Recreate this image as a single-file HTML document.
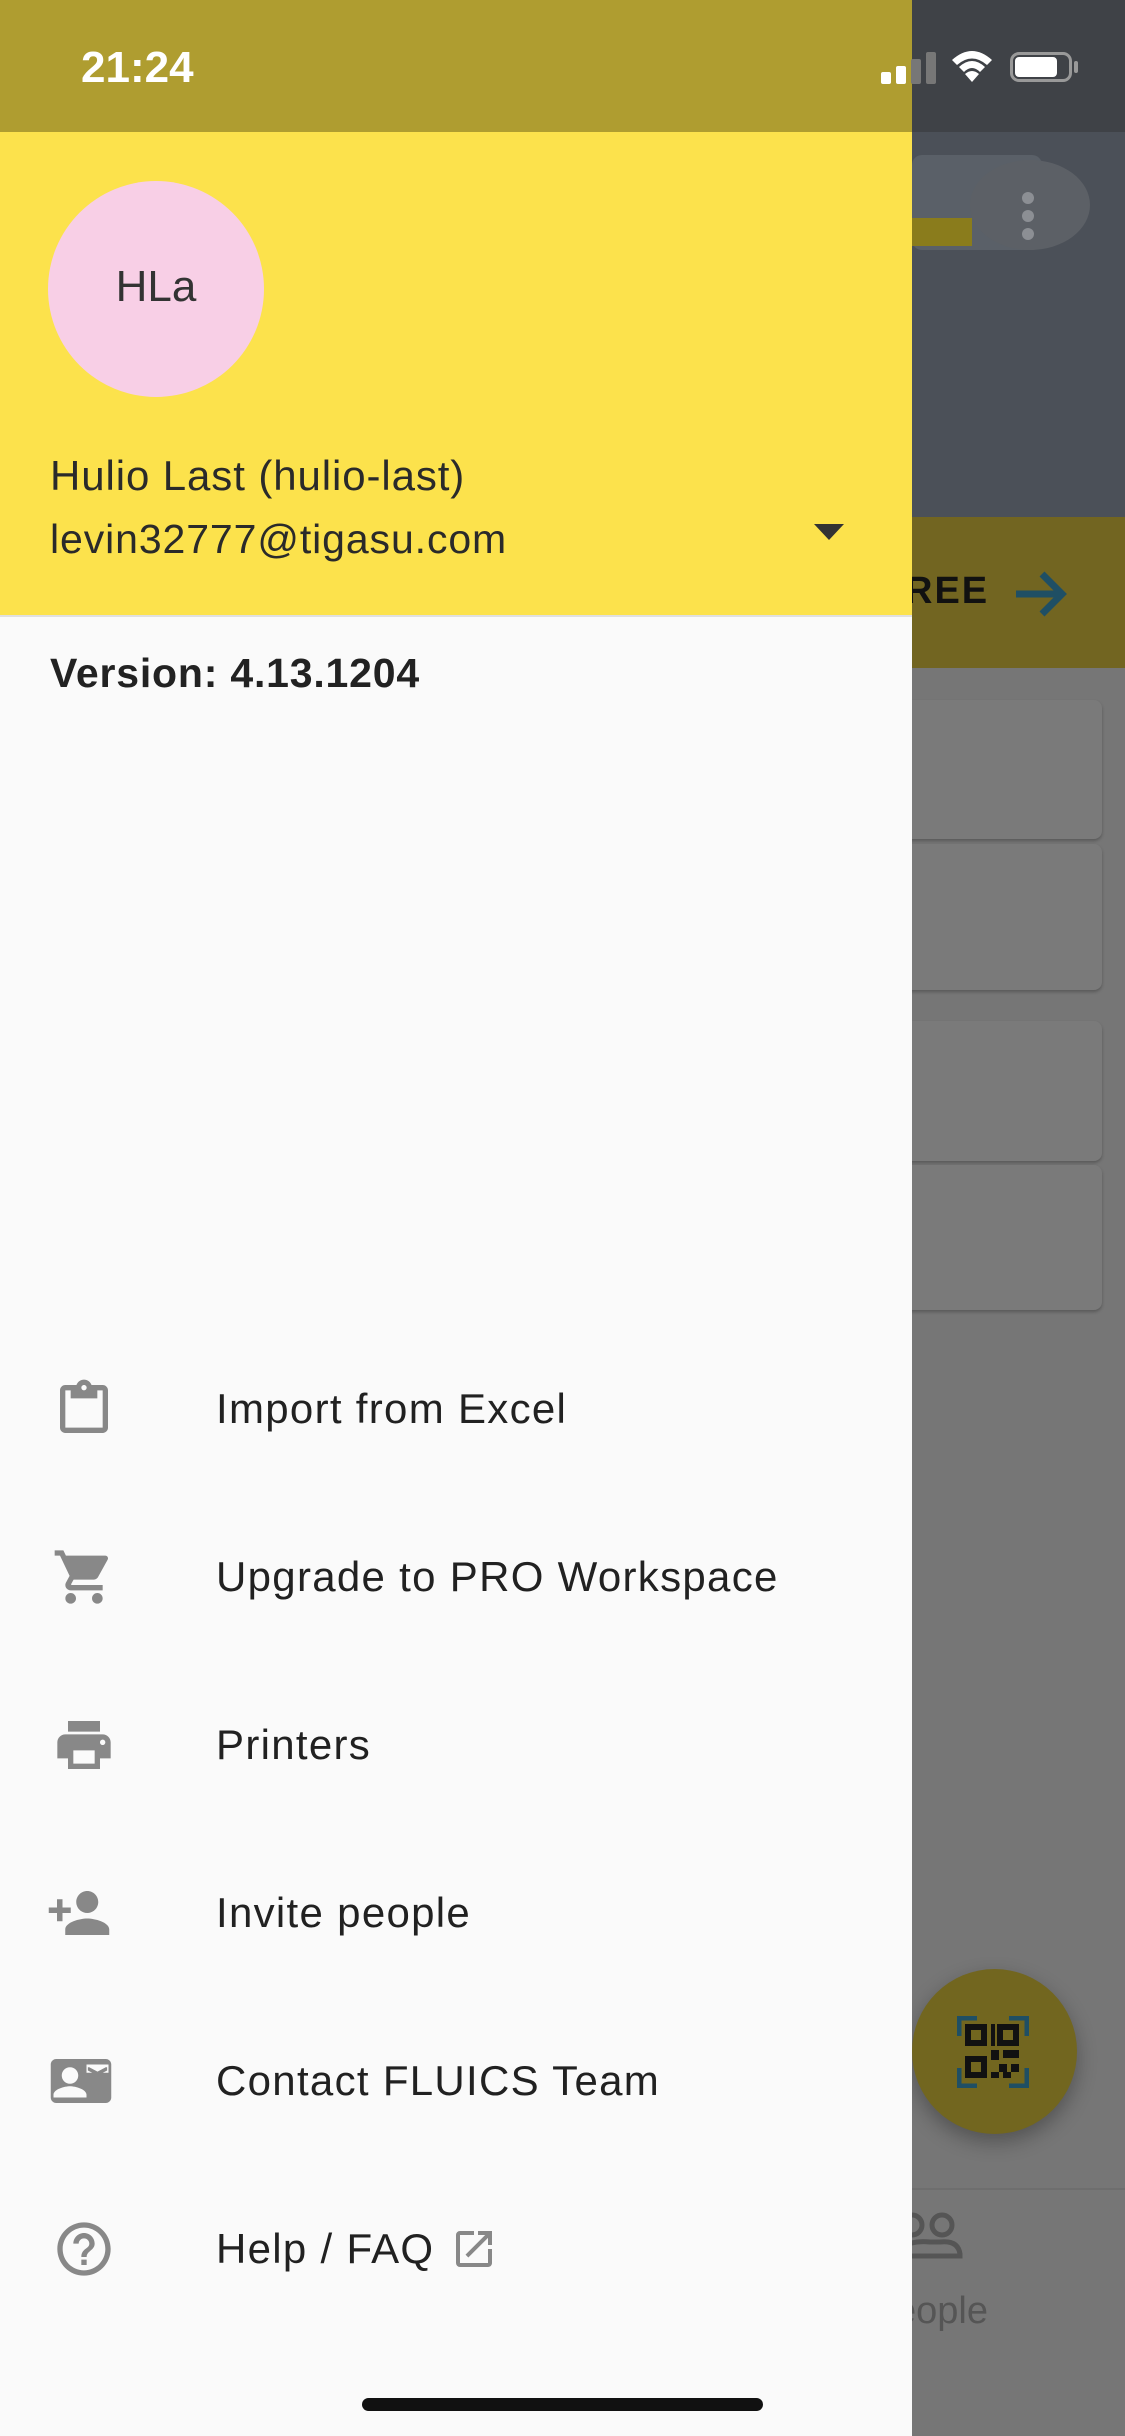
<!DOCTYPE html>
<html><head><meta charset="utf-8"><style>
*{margin:0;padding:0;box-sizing:border-box}
body{width:1125px;height:2436px;position:relative;overflow:hidden;font-family:"Liberation Sans",sans-serif;background:#767676}
.abs{position:absolute}
.drawer{left:0;top:0;width:912px;height:2436px;background:#fafafa}
.item{position:absolute;left:0;width:912px;height:168px}
.item .t{position:absolute;left:216px;top:50%;transform:translateY(-50%);font-size:42px;color:#212121;letter-spacing:1.3px}
.item svg{position:absolute;left:52px;top:50%;transform:translateY(-50%)}
</style></head><body>
<!-- background app (dimmed) -->
<div class="abs" style="left:880px;top:0;width:245px;height:132px;background:#3f4247"></div>
<div class="abs" style="left:880px;top:132px;width:245px;height:385px;background:#4b5058"></div>
<div class="abs" style="left:912px;top:155px;width:130px;height:95px;background:#5a6068;border-radius:10px"></div>
<div class="abs" style="left:970px;top:160px;width:120px;height:90px;border-radius:50%;background:#5c6066"></div>
<div class="abs" style="left:1022px;top:192px;width:12px;height:12px;border-radius:50%;background:#8c8f94"></div>
<div class="abs" style="left:1022px;top:210px;width:12px;height:12px;border-radius:50%;background:#8c8f94"></div>
<div class="abs" style="left:1022px;top:228px;width:12px;height:12px;border-radius:50%;background:#8c8f94"></div>
<div class="abs" style="left:912px;top:218px;width:60px;height:28px;background:#8a7c1c"></div>
<div class="abs" style="left:880px;top:517px;width:245px;height:151px;background:#726521"></div>
<div class="abs" style="left:905px;top:570px;font-size:38px;font-weight:bold;color:#111;letter-spacing:2px">REE</div>
<svg class="abs" style="left:1012px;top:570px" width="56" height="48" viewBox="0 0 56 48"><path d="M4 24H50M30 4L50 24L30 44" stroke="#1f4f64" stroke-width="7" fill="none"/></svg>
<div class="abs" style="left:880px;top:700px;width:222px;height:139px;background:#7a7a7a;border-radius:8px;box-shadow:0 2px 3px rgba(0,0,0,.25)"></div>
<div class="abs" style="left:880px;top:844px;width:222px;height:146px;background:#7a7a7a;border-radius:8px;box-shadow:0 2px 3px rgba(0,0,0,.25)"></div>
<div class="abs" style="left:880px;top:1021px;width:222px;height:140px;background:#7a7a7a;border-radius:8px;box-shadow:0 2px 3px rgba(0,0,0,.25)"></div>
<div class="abs" style="left:880px;top:1165px;width:222px;height:145px;background:#7a7a7a;border-radius:8px;box-shadow:0 2px 3px rgba(0,0,0,.25)"></div>
<div class="abs" style="left:880px;top:2188px;width:245px;height:2px;background:#6e6e6e"></div>
<div class="abs" style="left:912px;top:1969px;width:165px;height:165px;border-radius:50%;background:#72661f;box-shadow:0 8px 20px rgba(0,0,0,.3)"></div>
<svg class="abs" style="left:957px;top:2016px" width="72" height="72" viewBox="0 0 72 72"><g fill="none" stroke="#1f4f64" stroke-width="5"><path d="M2 20V2H20M52 2H70V20M70 52V70H52M20 70H2V52"/></g><g fill="#111"><rect x="8" y="8" width="22" height="22"/><rect x="40" y="8" width="22" height="22"/><rect x="8" y="40" width="22" height="22"/><rect x="34" y="8" width="4" height="22"/><rect x="34" y="34" width="8" height="10"/><rect x="46" y="34" width="16" height="8"/><rect x="42" y="48" width="8" height="8"/><rect x="54" y="48" width="8" height="8"/><rect x="34" y="56" width="8" height="6"/><rect x="46" y="56" width="8" height="6"/></g><g fill="#72661f"><rect x="14" y="14" width="10" height="10"/><rect x="46" y="14" width="10" height="10"/><rect x="14" y="46" width="10" height="10"/></g></svg>
<svg class="abs" style="left:900px;top:2210px" width="80" height="50" viewBox="0 0 80 50"><g fill="none" stroke="#555" stroke-width="5"><circle cx="12" cy="15" r="10"/><circle cx="42" cy="15" r="10"/><path d="M0 46V38Q12 30 30 32H40Q58 30 60 44V46H0"/></g></svg>
<div class="abs" style="left:895px;top:2290px;font-size:38px;color:#555">eople</div>
<!-- drawer -->
<div class="abs drawer"></div>
<div class="abs" style="left:0;top:0;width:912px;height:132px;background:#af9d30"></div>
<div class="abs" style="left:81px;top:43px;font-size:44px;font-weight:bold;color:#fff">21:24</div>
<!-- status icons -->
<div class="abs" style="left:881px;top:72px;width:10px;height:12px;background:#fff;border-radius:2px"></div>
<div class="abs" style="left:896px;top:66px;width:10px;height:18px;background:#fff;border-radius:2px"></div>
<div class="abs" style="left:911px;top:59px;width:10px;height:25px;background:#777;border-radius:2px"></div>
<div class="abs" style="left:926px;top:52px;width:10px;height:32px;background:#777;border-radius:2px"></div>
<svg class="abs" style="left:948px;top:44px" width="48" height="40" viewBox="0 0 48 36"><path d="M24 36L17 28Q24 22 31 28Z M4 14Q24 -4 44 14L39 19Q24 6 9 19Z M11 21Q24 9 37 21L32 26Q24 18 16 26Z" fill="#fff"/></svg>
<div class="abs" style="left:1010px;top:52px;width:62px;height:30px;border:3px solid #999;border-radius:9px"></div>
<div class="abs" style="left:1015px;top:57px;width:42px;height:20px;background:#fff;border-radius:4px"></div>
<div class="abs" style="left:1074px;top:61px;width:4px;height:12px;background:#999;border-radius:2px"></div>
<div class="abs" style="left:0;top:132px;width:912px;height:483px;background:#fce24c"></div>
<div class="abs" style="left:48px;top:181px;width:216px;height:216px;border-radius:50%;background:#f8cfe6"></div>
<div class="abs" style="left:48px;top:262px;width:216px;text-align:center;font-size:44px;color:#333">HLa</div>
<div class="abs" style="left:50px;top:452px;font-size:42px;color:#2a2a2a;letter-spacing:.9px">Hulio Last (hulio-last)</div>
<div class="abs" style="left:50px;top:516px;font-size:41px;color:#2a2a2a;letter-spacing:.9px">levin32777@tigasu.com</div>
<svg class="abs" style="left:814px;top:524px" width="30" height="16"><path d="M0 0H30L15 16Z" fill="#333"/></svg>
<div class="abs" style="left:0;top:615px;width:912px;height:2px;background:#e0e0e0"></div>
<div class="abs" style="left:50px;top:650px;font-size:41px;font-weight:bold;color:#222;letter-spacing:.8px">Version: 4.13.1204</div>

<div class="item" style="top:1325px"><svg width="64" height="64" viewBox="0 0 24 24"><path d="M19 3h-4.18C14.4 1.84 13.3 1 12 1s-2.4.84-2.82 2H5c-1.1 0-2 .9-2 2v14c0 1.1.9 2 2 2h14c1.1 0 2-.9 2-2V5c0-1.1-.9-2-2-2zm-7 0c.55 0 1 .45 1 1s-.45 1-1 1-1-.45-1-1 .45-1 1-1zm7 16H5V5h2v3h10V5h2v14z" fill="#888"/></svg><div class="t">Import from Excel</div></div>
<div class="item" style="top:1493px"><svg width="64" height="64" viewBox="0 0 24 24"><path d="M7 18c-1.1 0-1.99.9-1.99 2S5.9 22 7 22s2-.9 2-2-.9-2-2-2zM1 2v2h2l3.6 7.59-1.35 2.450c-.16.28-.25.61-.25.96 0 1.1.9 2 2 2h12v-2H7.42c-.14 0-.25-.11-.25-.25l.03-.12.9-1.63h7.45c.75 0 1.410-.41 1.75-1.03l3.58-6.49A1 1 0 0020 4H5.21l-.94-2H1zm16 16c-1.1 0-1.99.9-1.99 2s.89 2 1.99 2 2-.9 2-2-.9-2-2-2z" fill="#888"/></svg><div class="t">Upgrade to PRO Workspace</div></div>
<div class="item" style="top:1661px"><svg width="64" height="64" viewBox="0 0 24 24"><path d="M19 8H5c-1.66 0-3 1.34-3 3v6h4v4h12v-4h4v-6c0-1.66-1.34-3-3-3zm-3 11H8v-5h8v5zm3-7c-.55 0-1-.45-1-1s.45-1 1-1 1 .45 1 1-.45 1-1 1zm-1-9H6v4h12V3z" fill="#888"/></svg><div class="t">Printers</div></div>
<div class="item" style="top:1829px"><svg width="66" height="66" viewBox="0 0 24 24" style="left:46px"><path d="M15 12c2.21 0 4-1.79 4-4s-1.790-4-4-4-4 1.79-4 4 1.79 4 4 4zm-9-2V7H4v3H1v2h3v3h2v-3h3v-2H6zm9 4c-2.67 0-8 1.34-8 4v2h16v-2c0-2.66-5.33-4-8-4z" fill="#888"/></svg><div class="t">Invite people</div></div>
<div class="item" style="top:1997px"><svg width="66" height="66" viewBox="0 0 24 24" style="left:48px"><path d="M21 4H3C1.9 4 1 4.9 1 6v12c0 1.1.9 2 2 2h18c1.1 0 2-.9 2-2V6c0-1.1-.9-2-2-2zM8 7c1.66 0 3 1.34 3 3s-1.34 3-3 3-3-1.34-3-3 1.34-3 3-3zm6 11H2v-1c0-2 4-3.1 6-3.1s6 1.1 6 3.1v1zm8-9h-8V6h8v3zm-1-2l-3 1.6L15 7h-.5v1.2l3.5 1.8 3.5-1.8V7z" fill="#888"/></svg><div class="t">Contact FLUICS Team</div></div>
<div class="item" style="top:2165px"><svg width="64" height="64" viewBox="0 0 24 24"><path d="M11 18h2v-2h-2v2zm1-16C6.48 2 2 6.48 2 12s4.48 10 10 10 10-4.48 10-10S17.52 2 12 2zm0 18c-4.41 0-8-3.59-8-8s3.59-8 8-8 8 3.59 8 8-3.59 8-8 8zm0-14c-2.21 0-4 1.79-4 4h2c0-1.1.9-2 2-2s2 .9 2 2c0 2-3 1.75-3 5h2c0-2.25 3-2.5 3-5 0-2.21-1.79-4-4-4z" fill="#888"/></svg><div class="t">Help / FAQ</div>
<svg style="left:450px" width="48" height="48" viewBox="0 0 24 24"><path d="M19 19H5V5h7V3H5a2 2 0 00-2 2v14a2 2 0 002 2h14c1.1 0 2-.9 2-2v-7h-2v7zM14 3v2h3.59l-9.83 9.83 1.41 1.41L19 6.41V10h2V3h-7z" fill="#888"/></svg></div>

<div class="abs" style="left:362px;top:2398px;width:401px;height:13px;border-radius:7px;background:#111"></div>
</body></html>
